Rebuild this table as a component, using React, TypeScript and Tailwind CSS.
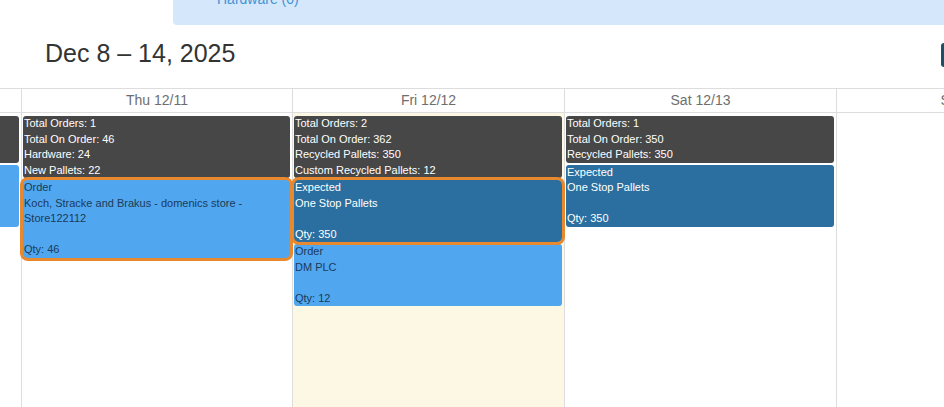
import type { ReactNode } from 'react';

type Ev = {
  kind: 'summary' | 'order' | 'expected';
  lines: string[];
  highlight?: boolean;
};

const days: { label: string; today?: boolean; width: string; events: Ev[] }[] = [
  {
    label: 'Wed 12/10',
    width: 'w-[272px]',
    events: [
      { kind: 'summary', lines: ['Total Orders: 1', 'Total On Order: 20', 'Hardware: 20'] },
      { kind: 'order', lines: ['Order', 'Acme Co', '', 'Qty: 20'] },
    ],
  },
  {
    label: 'Thu 12/11',
    width: 'w-[271px]',
    events: [
      {
        kind: 'summary',
        lines: ['Total Orders: 1', 'Total On Order: 46', 'Hardware: 24', 'New Pallets: 22'],
      },
      {
        kind: 'order',
        highlight: true,
        lines: ['Order', 'Koch, Stracke and Brakus - domenics store -', 'Store122112', '', 'Qty: 46'],
      },
    ],
  },
  {
    label: 'Fri 12/12',
    today: true,
    width: 'w-[272px]',
    events: [
      {
        kind: 'summary',
        lines: ['Total Orders: 2', 'Total On Order: 362', 'Recycled Pallets: 350', 'Custom Recycled Pallets: 12'],
      },
      { kind: 'expected', highlight: true, lines: ['Expected', 'One Stop Pallets', '', 'Qty: 350'] },
      { kind: 'order', lines: ['Order', 'DM PLC', '', 'Qty: 12'] },
    ],
  },
  {
    label: 'Sat 12/13',
    width: 'w-[272px]',
    events: [
      { kind: 'summary', lines: ['Total Orders: 1', 'Total On Order: 350', 'Recycled Pallets: 350'] },
      { kind: 'expected', lines: ['Expected', 'One Stop Pallets', '', 'Qty: 350'] },
    ],
  },
  { label: 'Sun 12/14', width: 'w-[272px]', events: [] },
];

const kindClass = {
  summary: 'bg-[#474747] text-white',
  order: 'bg-[#50a7ef] text-[#1c3a5a]',
  expected: 'bg-[#2a6f9f] text-white',
};

const EventBox = ({ ev }: { ev: Ev }) => {
  const lines: ReactNode[] = ev.lines.map((l, i) => (
    <div key={i} className="h-[15.5px] whitespace-nowrap">
      {l}
    </div>
  ));
  return (
    <div
      className={
        'relative mb-[2px] overflow-hidden pl-[1px] text-[11px] leading-[15.5px] ' +
        kindClass[ev.kind] +
        (ev.highlight
          ? ' z-10 rounded-[5px] ring-[3px] ring-[#e8892f]'
          : ' rounded-[3px]')
      }
    >
      {lines}
    </div>
  );
};

const App = () => {
  return (
    <div
      className="flex h-[407px] w-full flex-col overflow-hidden bg-white"
      style={{ fontFamily: '"Liberation Sans", Arial, sans-serif' }}
    >
      <div className="ml-[173px] h-[25px] shrink-0 overflow-hidden rounded-bl-[4px] bg-[#d5e8fb] pl-[44px]">
        <div className="-mt-[9px] text-[14px] leading-[16px] text-[#3f93d6]">Hardware (0)</div>
      </div>

      <div className="mt-[13px] flex shrink-0 items-start justify-between">
        <h2 className="pl-[45px] text-[25px] leading-[30px] text-[#333]">Dec 8 – 14, 2025</h2>
        <div className="mt-[5px] -mr-[77px] h-[24px] w-[80px] shrink-0 rounded-l-[3px] bg-[#1b5066]" />
      </div>

      <div className="mt-[20px] flex min-h-0 flex-1 flex-col">
        <div className="-ml-[251px] flex shrink-0 border-y border-[#dddddd]">
          {days.map((d) => (
            <div
              key={d.label}
              className={d.width + ' h-[23px] shrink-0 border-l border-[#dddddd] text-center text-[14px] leading-[23px] text-[#6e6e6e]'}
            >
              {d.label}
            </div>
          ))}
        </div>
        <div className="-ml-[251px] flex flex-1">
          {days.map((d) => (
            <div
              key={d.label}
              className={
                d.width +
                ' shrink-0 border-l border-[#dddddd] pl-[1px] pr-[2px] pt-[3px]' +
                (d.today ? ' bg-[#fcf8e3]' : '')
              }
            >
              {d.events.map((ev, i) => (
                <EventBox key={i} ev={ev} />
              ))}
            </div>
          ))}
        </div>
      </div>
    </div>
  );
};

export default App;
